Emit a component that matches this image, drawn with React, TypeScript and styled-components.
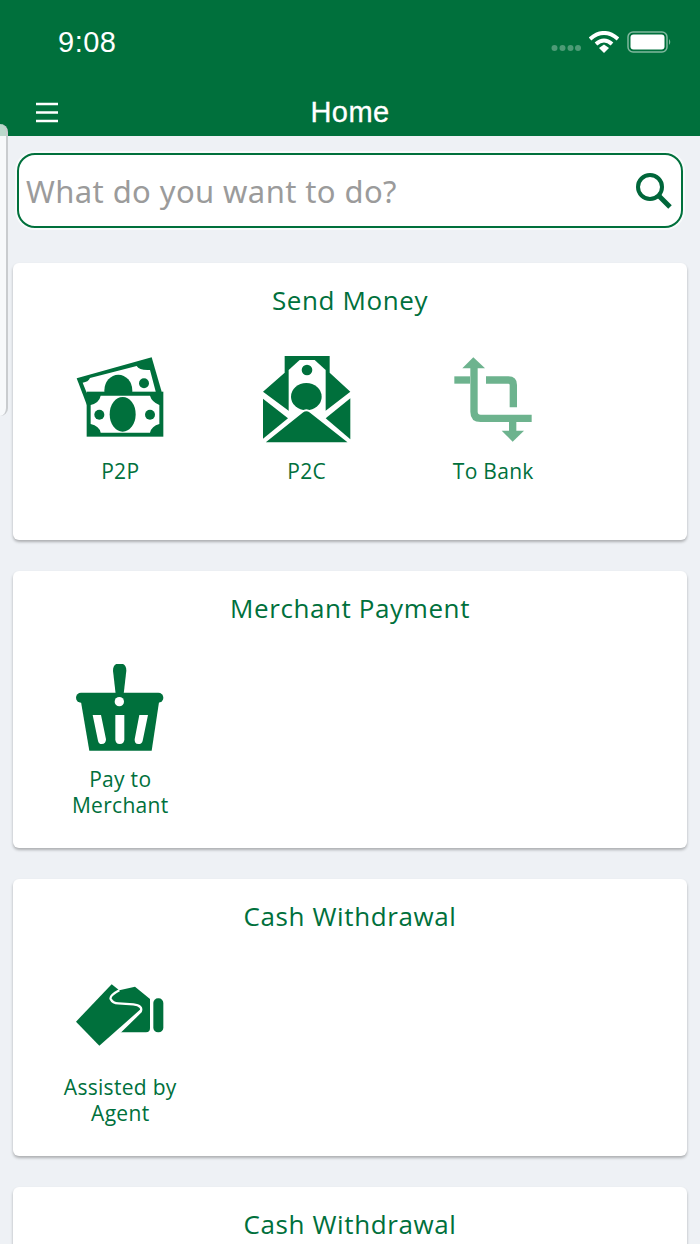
import React from 'react';
import styled, { createGlobalStyle } from 'styled-components';

const GREEN = '#00703c';

const GlobalStyle = createGlobalStyle`
  html, body {
    margin: 0;
    padding: 0;
    background: #eef1f5;
  }
  * {
    box-sizing: border-box;
  }
`;

const Page = styled.div`
  position: relative;
  width: 700px;
  height: 1244px;
  overflow: hidden;
  background: #eef1f5;
  font-family: 'Open Sans', 'Liberation Sans', sans-serif;
`;

const Header = styled.header`
  display: flex;
  flex-direction: column;
  height: 136px;
  background: ${GREEN};
  color: #fff;
  font-family: 'Liberation Sans', Arial, sans-serif;
`;

const StatusBar = styled.div`
  display: flex;
  align-items: center;
  justify-content: space-between;
  height: 84px;
  padding: 0 28px 0 58px;
`;

const Clock = styled.div`
  font-size: 29px;
  letter-spacing: 0.5px;
`;

const StatusIcons = styled.div`
  display: flex;
  align-items: center;
  gap: 8px;
`;

const SignalDots = styled.svg`
  margin-top: 12px;
`;

const NavBar = styled.div`
  display: grid;
  grid-template-columns: 1fr auto 1fr;
  align-items: center;
  height: 52px;
  padding: 0 36px;
`;

const NavTitle = styled.div`
  font-size: 29px;
  line-height: 56px;
  letter-spacing: 0.4px;
  -webkit-text-stroke: 0.3px #fff;
`;

const DrawerHandle = styled.div`
  position: absolute;
  left: 0;
  top: 124px;
  width: 8px;
  height: 292px;
  background: rgba(250, 251, 252, 0.75);
  border-right: 2px solid #c9cccf;
  border-radius: 0 8px 8px 0;
`;

const Content = styled.main`
  display: flex;
  flex-direction: column;
  gap: 31px;
  padding: 17px 13px 0;
`;

const SearchBox = styled.div`
  display: flex;
  align-items: center;
  justify-content: space-between;
  height: 75px;
  margin: 0 4px 4px;
  padding: 0 8px 0 7px;
  background: #fff;
  border: 2px solid ${GREEN};
  border-radius: 18px;
  box-shadow: 0 0 0 2px #f8fafb;
`;

const Placeholder = styled.span`
  font-family: 'Noto Sans', 'Open Sans', sans-serif;
  font-size: 31px;
  letter-spacing: 0.4px;
  color: #9b9b9b;
`;

const Card = styled.section`
  flex: none;
  height: 277px;
  padding: 22px 14px 0;
  background: #fff;
  border-radius: 6px;
  box-shadow: 0 2px 3px rgba(0, 0, 0, 0.28);
`;

const CardTitle = styled.h2`
  margin: 0 0 41px;
  font-size: 26px;
  font-weight: 400;
  line-height: 30px;
  letter-spacing: 0.6px;
  text-align: center;
  color: ${GREEN};
`;

const Tiles = styled.div`
  display: grid;
  grid-template-columns: repeat(3, 186.5px);
`;

const Tile = styled.div`
  display: flex;
  flex-direction: column;
  align-items: center;
  gap: 12px;
`;

const TileLabel = styled.div`
  width: 130px;
  font-size: 21px;
  line-height: 26px;
  letter-spacing: 0.3px;
  text-align: center;
  color: ${GREEN};
`;

const IconSvg = styled.svg`
  display: block;
  width: 88px;
  height: 90px;
`;

const MoneyIcon = () => (
  <IconSvg viewBox="18 18 264 270">
    <polygon points="20,85 245,22 275,125 60,190" fill={GREEN} />
    <path d="M38 98 Q55 96 60 84 L200 48 Q208 62 240 60 L258 128 H50 Z" fill="#fff" />
    <ellipse cx="145" cy="122" rx="42" ry="48" fill={GREEN} />
    <circle cx="222" cy="100" r="15" fill={GREEN} />
    <rect x="50" y="125" width="230" height="135" fill={GREEN} />
    <path
      d="M92 137 H240 Q245 155 268 165 V222 Q245 228 240 248 H92 Q88 228 62 222 V165 Q88 158 92 137 Z"
      fill="#fff"
    />
    <ellipse cx="158" cy="193" rx="39" ry="52" fill={GREEN} />
    <circle cx="88" cy="194" r="15" fill={GREEN} />
    <circle cx="240" cy="194" r="15" fill={GREEN} />
  </IconSvg>
);

const EnvelopeIcon = () => (
  <IconSvg viewBox="20 18 264 270">
    <polygon points="85,18 220,18 220,68 282,125 208,182 97,182 20,125 85,68" fill={GREEN} />
    <polygon points="97,190 97,60 130,30 175,30 208,60 208,190" fill="#fff" />
    <circle cx="152" cy="60" r="16" fill={GREEN} />
    <ellipse cx="150" cy="140" rx="46" ry="41" fill={GREEN} />
    <polygon points="18,145 95,205 18,268" fill={GREEN} />
    <polygon points="282,145 208,205 282,268" fill={GREEN} />
    <path d="M20 280 L138 185 Q150 176 162 185 L282 280 Z" fill={GREEN} stroke="#fff" strokeWidth="6" />
  </IconSvg>
);

const BankIcon = () => (
  <IconSvg viewBox="57 48 264 270">
    <g fill="none" stroke="#6db38e" strokeWidth="22">
      <path d="M132 80 V215 Q132 235 152 235 H305" />
      <path d="M73 120 H120" />
      <path d="M168 120 H235 Q250 120 250 135 V202" />
      <path d="M248 245 V280" />
    </g>
    <polygon points="97,85 130,52 165,85" fill="#6db38e" />
    <polygon points="215,272 248,305 282,272" fill="#6db38e" />
  </IconSvg>
);

const BasketIcon = () => (
  <IconSvg viewBox="78 42 264 270">
    <path d="M197 132 L189 62 Q189 40 209 40 Q229 40 229 62 L221 132 Z" fill={GREEN} />
    <rect x="78" y="128" width="262" height="30" rx="15" fill={GREEN} />
    <polygon points="92,150 328,150 305,302 118,302" fill={GREEN} />
    <circle cx="208" cy="155" r="14" fill="#fff" />
    <g fill="#fff">
      <path d="M128 195 H153 L168 268 Q168 282 155 282 Q146 282 144 272 Z" />
      <path d="M196 195 H223 V268 Q223 282 209 282 Q196 282 196 268 Z" />
      <path d="M268 195 H294 L278 272 Q276 282 265 282 Q253 282 254 268 Z" />
    </g>
  </IconSvg>
);

const HandCardIcon = () => (
  <IconSvg viewBox="18 -9 264 270">
    <polygon points="18,140 125,28 215,100 88,212" fill={GREEN} />
    <path
      d="M148 46 L195 35 L240 72 V160 Q240 172 228 172 H145 L212 110 Q220 92 190 88 L145 85 Q128 85 122 72 Q118 62 148 46 Z"
      fill={GREEN}
    />
    <rect x="250" y="70" width="30" height="102" rx="14" fill={GREEN} />
    <path
      d="M148 46 Q118 62 122 72 Q128 85 145 85 L190 88 Q220 92 212 110 L145 175"
      fill="none"
      stroke="#fff"
      strokeWidth="7"
    />
  </IconSvg>
);

const SearchIcon = () => (
  <svg width="38" height="38" viewBox="0 0 38 38" fill="none" stroke="#00663a">
    <circle cx="15" cy="15" r="12" strokeWidth="4" />
    <path d="M24 24 L35 35" strokeWidth="5" />
  </svg>
);

const sections = [
  {
    title: 'Send Money',
    tiles: [
      { label: 'P2P', icon: <MoneyIcon /> },
      { label: 'P2C', icon: <EnvelopeIcon /> },
      { label: 'To Bank', icon: <BankIcon /> },
    ],
  },
  { title: 'Merchant Payment', tiles: [{ label: 'Pay to Merchant', icon: <BasketIcon /> }] },
  { title: 'Cash Withdrawal', tiles: [{ label: 'Assisted by Agent', icon: <HandCardIcon /> }] },
  { title: 'Cash Withdrawal', tiles: [] },
];

const App = () => {
  return (
    <Page>
      <GlobalStyle />
      <Header>
        <StatusBar>
          <Clock>9:08</Clock>
          <StatusIcons>
            <SignalDots width="30" height="8" viewBox="0 0 30 8" fill="#fff" fillOpacity="0.3">
              <circle cx="3.5" cy="4" r="3" />
              <circle cx="11.5" cy="4" r="3" />
              <circle cx="19.5" cy="4" r="3" />
              <circle cx="27" cy="4" r="3" />
            </SignalDots>
            <svg width="30" height="22" viewBox="0 0 30 22">
              <path d="M1 8 Q15 -4 29 8" fill="none" stroke="#fff" strokeWidth="4" />
              <path d="M7 13 Q15 6 23 13" fill="none" stroke="#fff" strokeWidth="4" />
              <polygon points="10,17 15,13.5 20,17 15,22" fill="#fff" />
            </svg>
            <svg width="45" height="22" viewBox="0 0 45 22">
              <rect x="1" y="1" width="39" height="20" rx="5" fill="none" stroke="#fff" strokeOpacity="0.5" strokeWidth="1.5" />
              <rect x="3.5" y="3.5" width="34" height="15" rx="3" fill="#fff" />
              <path d="M42 8 Q44.5 11 42 14 Z" fill="#fff" fillOpacity="0.5" />
            </svg>
          </StatusIcons>
        </StatusBar>
        <NavBar>
          <svg width="22" height="21" viewBox="0 0 22 21" stroke="#fff" strokeWidth="2.4">
            <path d="M0 2 H22 M0 10.5 H22 M0 19 H22" />
          </svg>
          <NavTitle>Home</NavTitle>
        </NavBar>
      </Header>
      <DrawerHandle />
      <Content>
        <SearchBox>
          <Placeholder>What do you want to do?</Placeholder>
          <SearchIcon />
        </SearchBox>
        {sections.map((section, i) => (
          <Card key={i}>
            <CardTitle>{section.title}</CardTitle>
            <Tiles>
              {section.tiles.map((tile) => (
                <Tile key={tile.label}>
                  {tile.icon}
                  <TileLabel>{tile.label}</TileLabel>
                </Tile>
              ))}
            </Tiles>
          </Card>
        ))}
      </Content>
    </Page>
  );
};

export default App;
